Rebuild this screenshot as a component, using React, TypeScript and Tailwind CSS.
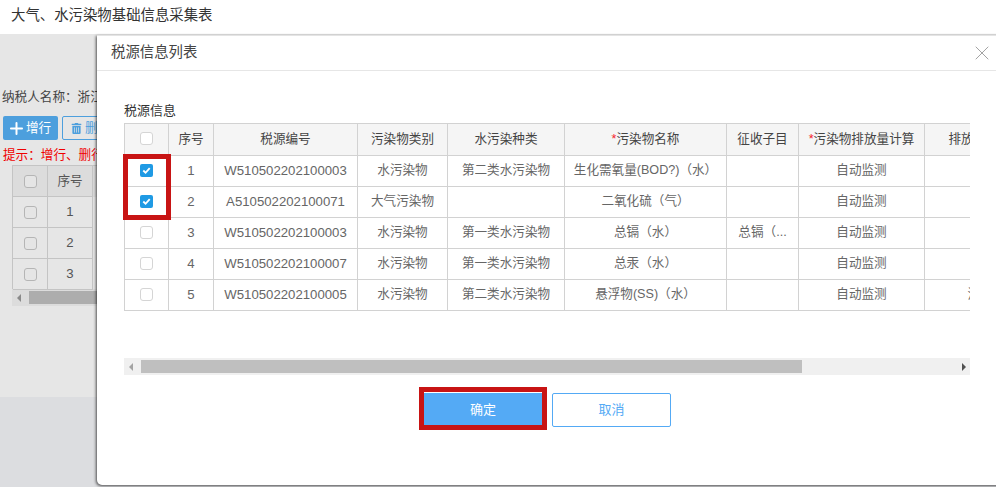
import { Plus, X } from "lucide-react";
import { FaTrashAlt } from "react-icons/fa";

const font = "font-['Liberation_Sans','Noto_Sans_CJK_SC',sans-serif]";

const columns = [44, 45, 144, 90, 117, 162, 72, 126, 111];

// full-width brackets and colon, as in the original page
const L = "\uFF08";
const R = "\uFF09";
const COLON = "\uFF1A";

const rows = [
	{ no: 1, code: "W510502202100003", cat: "水污染物", kind: "第二类水污染物", name: `生化需氧量(BOD?)${L}水${R}`, sub: "", last: "", checked: true },
	{ no: 2, code: "A510502202100071", cat: "大气污染物", kind: "", name: `二氧化硫${L}气${R}`, sub: "", last: "", checked: true },
	{ no: 3, code: "W510502202100003", cat: "水污染物", kind: "第一类水污染物", name: `总镉${L}水${R}`, sub: `总镉${L}...`, last: "", checked: false },
	{ no: 4, code: "W510502202100007", cat: "水污染物", kind: "第一类水污染物", name: `总汞${L}水${R}`, sub: "", last: "", checked: false },
	{ no: 5, code: "W510502202100005", cat: "水污染物", kind: "第二类水污染物", name: `悬浮物(SS)${L}水${R}`, sub: "", last: "污水", checked: false },
];

function Checkbox({ checked = false, dim = false }: { checked?: boolean; dim?: boolean }) {
	if (checked) {
		return (
			<span className="mx-auto mb-[2px] flex h-[13px] w-[13px] items-center justify-center rounded-[2px] bg-[#1f9ae4]">
				<svg viewBox="0 0 12 12" className="h-[11px] w-[11px]" fill="none" stroke="#fff" strokeWidth="2">
					<path d="M2.5 6 L5 8.5 L9.5 3.5" />
				</svg>
			</span>
		);
	}
	return (
		<span
			className={`mx-auto block h-[13px] w-[13px] rounded-[3px] border ${dim ? "border-[#b5b5b5] bg-[#e5e5e5]" : "mb-[2px] border-[#d5d5d5] bg-white"}`}
		/>
	);
}

function Star() {
	return <span className="text-[#f5222d]">*</span>;
}

function BackgroundTable() {
	return (
		<div className="ml-3 w-[300px]">
			<div className="border-t border-l border-[#c4c4c4] text-[12.6px] text-[#555]">
				<div className="flex h-[31px] bg-[#dcdcdc]">
					<div className="flex w-[35px] items-center border-r border-b border-[#c4c4c4]">
						<Checkbox dim />
					</div>
					<div className="flex w-[45px] items-center justify-center border-r border-b border-[#c4c4c4]">序号</div>
				</div>
				{[1, 2, 3].map((n) => (
					<div key={n} className="flex h-[31px]">
						<div className="flex w-[35px] items-center border-r border-b border-[#c4c4c4]">
							<Checkbox dim />
						</div>
						<div className="flex w-[45px] items-center justify-center border-r border-b border-[#c4c4c4] text-[13.2px]">{n}</div>
					</div>
				))}
			</div>
			<div className="-mt-px flex h-[17px] items-center bg-[#dcdcdc]">
				<span className="ml-[5px] h-0 w-0 border-y-[4px] border-r-[4px] border-y-transparent border-r-[#8a8a8a]" />
				<div className="ml-[8px] h-[13px] flex-1 bg-[#adadad]" />
			</div>
		</div>
	);
}

function SourceTable() {
	return (
		<div className="w-[846px] overflow-hidden">
			<table className="table-fixed border-separate border-spacing-0 border-t border-l border-[#d2d2d2] text-center text-[12.6px] text-[#666]" style={{ width: 912 }}>
				<colgroup>
					{columns.map((w, i) => (
						<col key={i} style={{ width: w }} />
					))}
				</colgroup>
				<thead>
					<tr className="h-[32px] bg-[#f5f5f5] text-[#444]">
						<th className="border-r border-b border-[#d2d2d2] font-normal"><Checkbox /></th>
						<th className="border-r border-b border-[#d2d2d2] font-normal">序号</th>
						<th className="border-r border-b border-[#d2d2d2] font-normal">税源编号</th>
						<th className="border-r border-b border-[#d2d2d2] font-normal">污染物类别</th>
						<th className="border-r border-b border-[#d2d2d2] font-normal">水污染种类</th>
						<th className="border-r border-b border-[#d2d2d2] font-normal"><Star />污染物名称</th>
						<th className="border-r border-b border-[#d2d2d2] font-normal">征收子目</th>
						<th className="border-r border-b border-[#d2d2d2] font-normal"><Star />污染物排放量计算</th>
						<th className="border-r border-b border-[#d2d2d2] font-normal">排放口名称</th>
					</tr>
				</thead>
				<tbody>
					{rows.map((r) => (
						<tr key={r.no} className="h-[31px]">
							<td className="border-r border-b border-[#d2d2d2]"><Checkbox checked={r.checked} /></td>
							<td className="border-r border-b border-[#d2d2d2] pb-px text-[13.2px]">{r.no}</td>
							<td className="border-r border-b border-[#d2d2d2] pb-px text-[13.2px]">{r.code}</td>
							<td className="border-r border-b border-[#d2d2d2] pb-px">{r.cat}</td>
							<td className="border-r border-b border-[#d2d2d2] pb-px">{r.kind}</td>
							<td className="border-r border-b border-[#d2d2d2] pb-px">{r.name}</td>
							<td className="border-r border-b border-[#d2d2d2] pb-px">{r.sub}</td>
							<td className="border-r border-b border-[#d2d2d2] pb-px">自动监测</td>
							<td className="border-r border-b border-[#d2d2d2] pb-px">{r.last}</td>
						</tr>
					))}
				</tbody>
			</table>
		</div>
	);
}

function Modal() {
	return (
		<div className="absolute top-[35px] left-[97px] flex h-[450px] w-[905px] flex-col rounded-bl-[5px] border-t border-[#e4e4e4] bg-white shadow-[-1px_1px_3px_rgba(0,0,0,0.65)]">
			<div className="flex h-[35px] shrink-0 items-center justify-between border-b border-[#e6e6e6] pr-[8px] pl-[14px] text-[14.4px] text-[#444]">
				<span>税源信息列表</span>
				<X className="h-[24px] w-[24px] text-[#a3a3a3]" strokeWidth={1} />
			</div>
			<div className="flex flex-1 flex-col pl-[27px]">
				<div className="flex h-[52px] shrink-0 items-end pb-[3px] text-[13px] leading-[18px] text-[#333]">税源信息</div>
				<SourceTable />
				<div className="mt-[47px] flex h-[17px] w-[846px] items-center bg-[#f0f0f0]">
					<span className="ml-[5px] h-0 w-0 border-y-[4px] border-r-[4px] border-y-transparent border-r-[#a3a3a3]" />
					<div className="ml-[8px] h-[13px] w-[661px] bg-[#bfbfbf]" />
					<span className="ml-auto mr-[4px] h-0 w-0 border-y-[4px] border-l-[4px] border-y-transparent border-l-[#505050]" />
				</div>
				<div className="mt-[18px] flex pl-[300px]">
					<button className="flex h-[34px] w-[118px] items-center justify-center bg-[#54aaf5] text-[13px] text-white">确定</button>
					<button className="ml-[10px] flex h-[34px] w-[119px] items-center justify-center rounded-[2px] border border-[#54aaf5] bg-white text-[13px] text-[#54aaf5]">取消</button>
				</div>
			</div>
		</div>
	);
}

export default function App() {
	return (
		<div className={`${font} relative flex h-[487px] w-[996px] flex-col overflow-hidden bg-white`}>
			<div className="flex h-[34px] shrink-0 items-center pb-[2px] pl-[11px] text-[14.4px] text-[#333]">大气、水污染物基础信息采集表</div>
			<div className="h-[363px] shrink-0 bg-[#e6e6e6] pt-[53px]">
				<div className="h-[20px] pl-[2px] text-[12.6px] leading-[20px] whitespace-nowrap text-[#444]">{`纳税人名称${COLON}浙江省`}</div>
				<div className="mt-[9px] flex h-[24px] gap-[4px] pl-[3px]">
					<button className="flex w-[55px] items-center justify-start rounded-[2px] bg-[#4d9fdd] pl-[4px] text-[12.6px] text-white">
						<Plus className="h-[19px] w-[19px]" strokeWidth={2.5} />
						增行
					</button>
					<button className="flex w-[70px] items-center justify-start gap-[3px] rounded-[2px] border border-[#4d9fdd] pl-[8px] text-[12.6px] text-[#4d9fdd]">
						<FaTrashAlt className="h-[11px] w-[11px]" />
						删行
					</button>
				</div>
				<div className="mt-[5px] h-[20px] pl-[3px] text-[12.6px] leading-[20px] whitespace-nowrap text-[#f00000]">{`提示${COLON}增行、删行`}</div>
				<BackgroundTable />
			</div>
			<div className="flex-1 bg-[#dcdde0]" />
			<Modal />
			<div className="absolute top-[154px] left-[123px] h-[66px] w-[48px] border-[5px] border-[#c81414]" />
			<div className="absolute top-[387px] left-[419px] h-[43px] w-[128px] border-[5px] border-[#c81414]" />
		</div>
	);
}
